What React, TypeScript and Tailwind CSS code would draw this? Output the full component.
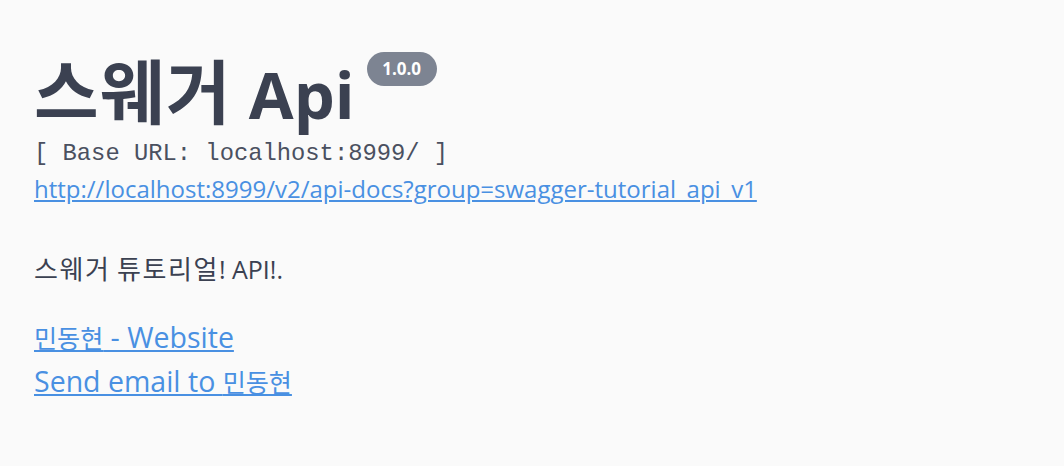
const Ko = ({ children }: { children: React.ReactNode }) => (
  <span className="text-[1.04em] tracking-[0.06em]">{children}</span>
);

const App = () => {
  return (
    <div className="min-h-[466px] w-full bg-[#fafafa] px-[34px] pt-[56px] font-['Open_Sans','Noto_Sans_CJK_KR',sans-serif] text-[#3b4151]">
      <div className="flex items-start">
        <h2 className="text-[65px] font-bold leading-[72px]">
          <span className="text-[1.08em] tracking-[0.02em]">스웨거</span> Api
        </h2>
        <span className="ml-[12px] mt-[-4px] flex h-[34px] w-[70px] items-center justify-center rounded-full bg-[#7d8492] text-[17px] font-bold text-white">
          1.0.0
        </span>
      </div>
      <div className="mt-[9px] font-['Liberation_Mono',monospace] text-[23.8px] font-light leading-[30px] text-[#4a5060]">
        [ Base URL: localhost:8999/ ]
      </div>
      <a
        href="#"
        className="mt-[5px] block text-[24px] leading-[30px] text-[#4990e2] underline"
      >
        http://localhost:8999/v2/api-docs?group=swagger-tutorial_api_v1
      </a>
      <p className="mt-[50px] text-[25px] leading-[30px]">
        <Ko>스웨거</Ko> <Ko>튜토리얼</Ko>! API!.
      </p>
      <div className="mt-[38px] flex flex-col gap-[13px] text-[28.5px] leading-[30px]">
        <a href="#" className="text-[#4990e2] underline">
          <span className="text-[0.88em]">민동현</span> - Website
        </a>
        <a href="#" className="text-[#4990e2] underline">
          Send email to <span className="text-[0.88em]">민동현</span>
        </a>
      </div>
    </div>
  );
};

export default App;
